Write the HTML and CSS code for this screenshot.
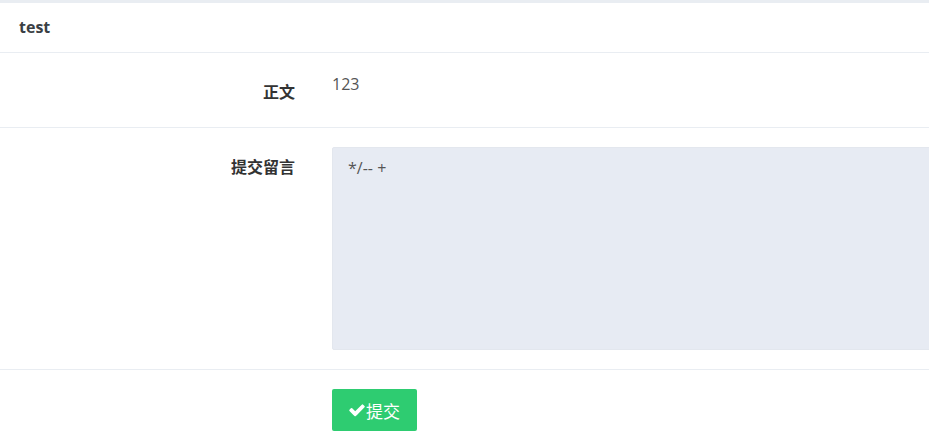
FILE: index.html
```html
<!DOCTYPE html>
<html lang="zh">
<head>
<meta charset="utf-8">
<title>test</title>
<link rel="stylesheet" href="styles.css">
</head>
<body>
<div class="panel">
  <div class="panel-head">test</div>
  <div class="row">
    <div class="label">正文</div>
    <div class="value">123</div>
  </div>
  <div class="row">
    <div class="label">提交留言</div>
    <div class="value"><textarea class="msg">*/-- +</textarea></div>
  </div>
  <div class="row last">
    <div class="label"></div>
    <div class="value"><button class="btn"><svg class="ico" viewBox="0 0 1792 1792" width="18" height="18"><path fill="#fff" d="M1671 566q0 40-28 68l-724 724-136 136q-28 28-68 28t-68-28l-136-136-362-362q-28-28-28-68t28-68l136-136q28-28 68-28t68 28l294 295 656-657q28-28 68-28t68 28l136 136q28 28 28 68z"/></svg>提交</button></div>
  </div>
</div>
</body>
</html>
```
FILE: styles.css
```css
html, body { margin: 0; padding: 0; overflow: hidden; background: #fff; }
body {
  font-family: "Open Sans", "Noto Sans CJK SC", sans-serif;
  color: #555;
}
.panel { border-top: 3px solid #e9edf2; }
.panel-head {
  height: 49px;
  line-height: 49px;
  padding-left: 19px;
  font-size: 16px;
  font-weight: 700;
  color: #3a3f45;
  border-bottom: 1px solid #e9edf2;
}
.row {
  display: grid;
  grid-template-columns: 295px 1fr;
  column-gap: 37px;
  padding: 19px 0;
  border-bottom: 1px solid #e9edf2;
}
.row.last { border-bottom: none; }
.label {
  text-align: right;
  padding-top: 8px;
  font-size: 16px;
  line-height: 24px;
  font-weight: 700;
  color: #333;
}
.value {
  min-height: 36px;
  font-size: 16px;
  line-height: 24px;
  color: #555;
}
.msg {
  display: block;
  box-sizing: border-box;
  width: calc(100% + 40px);
  height: 203px;
  margin: 0;
  padding: 8px 15px;
  border: 1px solid #e3e7ee;
  border-radius: 2px;
  background: #e7ebf3;
  font-family: "Open Sans", "Noto Sans CJK SC", sans-serif;
  font-size: 16px;
  line-height: 24px;
  color: #555;
  resize: none;
  outline: none;
}
.btn {
  display: flex;
  align-items: center;
  box-sizing: border-box;
  width: 85px;
  height: 42px;
  padding: 0 0 0 16px;
  border: none;
  border-radius: 2px;
  background: #2ecc71;
  color: #fff;
  font-family: "Open Sans", "Noto Sans CJK SC", sans-serif;
  font-size: 17px;
  cursor: pointer;
}
.ico { display: block; margin-right: 0; }
```
